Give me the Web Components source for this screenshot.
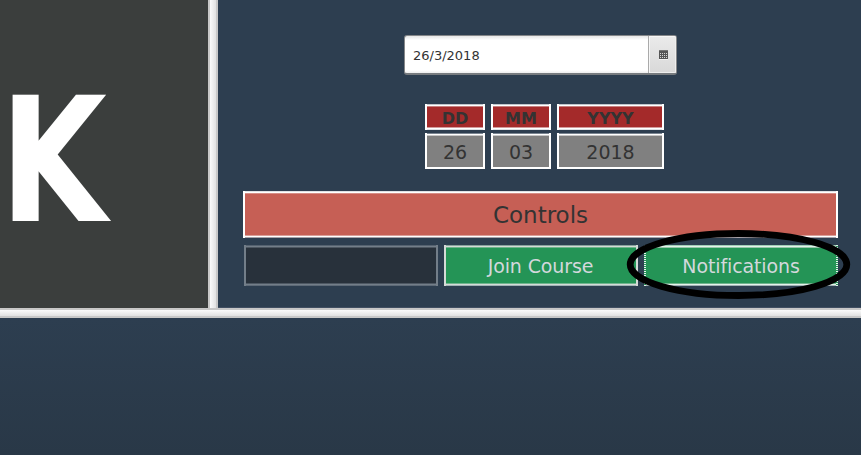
<!DOCTYPE html>
<html lang="en"><head><meta charset="utf-8"><title>Course dashboard</title>
<style>html,body{margin:0;height:100%;overflow:hidden;background:#2d3e50;font-family:"DejaVu Sans",sans-serif}</style>
</head><body>
<course-dashboard></course-dashboard>
<script>
const define=(name,html)=>customElements.define(name,class extends HTMLElement{
  constructor(){super();this.attachShadow({mode:'open'}).innerHTML=html;}
});

define('split-bar',`<style>
:host{display:block;box-sizing:border-box;border:solid #c8c8c8;border-width:2px 0;background:linear-gradient(#fbfbfb,#e1e1e1)}
:host([vertical]){border-width:0 2px;background:linear-gradient(90deg,#fbfbfb,#e1e1e1)}
</style>`);

define('logo-panel',`<style>
:host{display:block;background:#3b3e3d;color:#fff;overflow:hidden}
span{display:block;margin-top:59.5px;font-weight:bold;font-size:173.5px;line-height:202px;width:max-content;transform:scaleX(.795);transform-origin:0 0}
</style><span><slot></slot></span>`);

define('date-picker',`<style>
:host{display:flex;box-sizing:border-box;width:273px;height:40px;border:1px solid #858789;border-bottom:2px solid #777b7f;border-radius:3px;background:linear-gradient(#e6e6e6,#fff 4px,#fff 34px,#eee);overflow:hidden}
span{flex:1;padding-left:8.5px;font-size:13px;line-height:40px;color:#333}
div{width:28px;box-sizing:border-box;border-left:1px solid #aaa;box-shadow:inset 1px 1px #f6f6f6,inset -1px -1px #eee;background:linear-gradient(#ebebeb,#d8d8d8);display:flex;align-items:center;justify-content:center;padding-left:2px}
svg{display:block}
</style><span><slot></slot></span><div><svg width="9" height="10" viewBox="0 0 9 10" shape-rendering="crispEdges"><path fill="#555" d="M0 0h9v9H0z"/><path fill="#777" d="M0 0h9v1H0z"/><path stroke="#d5d5d5" stroke-dasharray="1 1" d="M1 3.5h7M1 5.5h7M1 7.5h7"/><path fill="#f2f2f2" d="M0 9h9v1H0z"/></svg></div>`);

// A box whose horizontal borders are three rows deep, softened at the outer and inner rows.
define('edge-box',`<style>
:host{display:flex;align-items:center;justify-content:center;box-sizing:border-box;color:#333;
border:solid var(--edge,#fff);border-width:0 2px;
background:linear-gradient(var(--t1),var(--t1)) 0 0/100% 1px no-repeat border-box,linear-gradient(var(--edge,#fff),var(--edge,#fff)) 0 1px/100% 1px no-repeat,linear-gradient(var(--t3),var(--t3)) 0 2px/100% 1px no-repeat,
linear-gradient(var(--b1),var(--b1)) 0 calc(100% - 2px)/100% 1px no-repeat,linear-gradient(var(--edge,#fff),var(--edge,#fff)) 0 calc(100% - 1px)/100% 1px no-repeat,linear-gradient(var(--b3),var(--b3)) 0 100%/100% 1px no-repeat,var(--fill)}
:host([kind=head]){--fill:#a42a2a;--t1:#c0c5cb;--t3:#c87f7f;--b1:#d39c9c;--b3:#e0e2e5;font-weight:bold;font-size:16px;padding:2px 0 0 1px}
:host([kind=value]){--fill:#808080;--t1:#7b8692;--t3:#c8c8c8;--b1:#808080;--b3:#fff;font-size:19px;padding:2px 0 0 1px}
:host([kind=title]){--fill:#c65f55;--t1:#dfe2e5;--t3:#d68e87;--b1:#dc9f99;--b3:#a8a3aa;font-size:23px;padding-left:1px}
:host([kind=blank]){--edge:#737e89;--fill:#28313b;--t1:#54616f;--t3:#4d5762;--b1:#4d5762;--b3:#5e6a77}
:host([kind=action]){--edge:#d5dad7;--fill:#249456;--t1:#87a19b;--t3:#6fb58d;--b1:#70b58e;--b3:#a2b2b5;color:#d3d8dc;font-size:19px;letter-spacing:-.12px}
:host([focused]){--edge:#e5f2eb;--t1:#a0cdb5;--t3:#96c9aa;padding-left:1px;
border-image:repeating-linear-gradient(#e5f2eb 0 1px,#249456 1px 2px) 0 2/0 2px}
</style><slot></slot>`);

define('date-fields',`<style>
:host{display:grid;grid-template-columns:60px 60px 107px;grid-template-rows:26px 36px;gap:3px 6px}
</style><edge-box kind="head">DD</edge-box><edge-box kind="head">MM</edge-box><edge-box kind="head">YYYY</edge-box>
<edge-box kind="value">26</edge-box><edge-box kind="value">03</edge-box><edge-box kind="value">2018</edge-box>`);

define('control-panel',`<style>
:host{display:block;width:595px}
.title{height:47px}
.row{display:grid;grid-template-columns:repeat(3,194px);gap:6px;height:41px;margin:7px 0 0 1px}
.mark{position:relative}
svg{position:absolute;left:-18px;top:-16px;pointer-events:none}
.mark edge-box{height:41px}
</style><edge-box class="title" kind="title">Controls</edge-box>
<div class="row"><edge-box kind="blank"></edge-box><edge-box kind="action">Join Course</edge-box>
<div class="mark"><edge-box kind="action" focused>Notifications</edge-box>
<svg width="226" height="71" viewBox="0 0 226 71"><ellipse cx="112.5" cy="35.5" rx="108.3" ry="31" fill="none" stroke="#000" stroke-width="6.8"/></svg></div></div>`);

define('course-dashboard',`<style>
:host{display:grid;height:455px;grid-template-rows:308px 10px 1fr}
.top{display:grid;grid-template-columns:208px 10px 1fr}
main{background:#2d3e50;display:flex;flex-direction:column;align-items:center;padding:35px 1px 0 2px;border-bottom:1px solid #414f62;box-sizing:border-box}
date-fields{margin:29px 0 22px;transform:translateX(4px)}
footer{background:linear-gradient(#2d3e50,#293847)}
</style><div class="top"><logo-panel>K</logo-panel><split-bar vertical></split-bar>
<main><date-picker>26/3/2018</date-picker><date-fields></date-fields><control-panel></control-panel></main></div>
<split-bar></split-bar><footer></footer>`);
</script></body></html>
